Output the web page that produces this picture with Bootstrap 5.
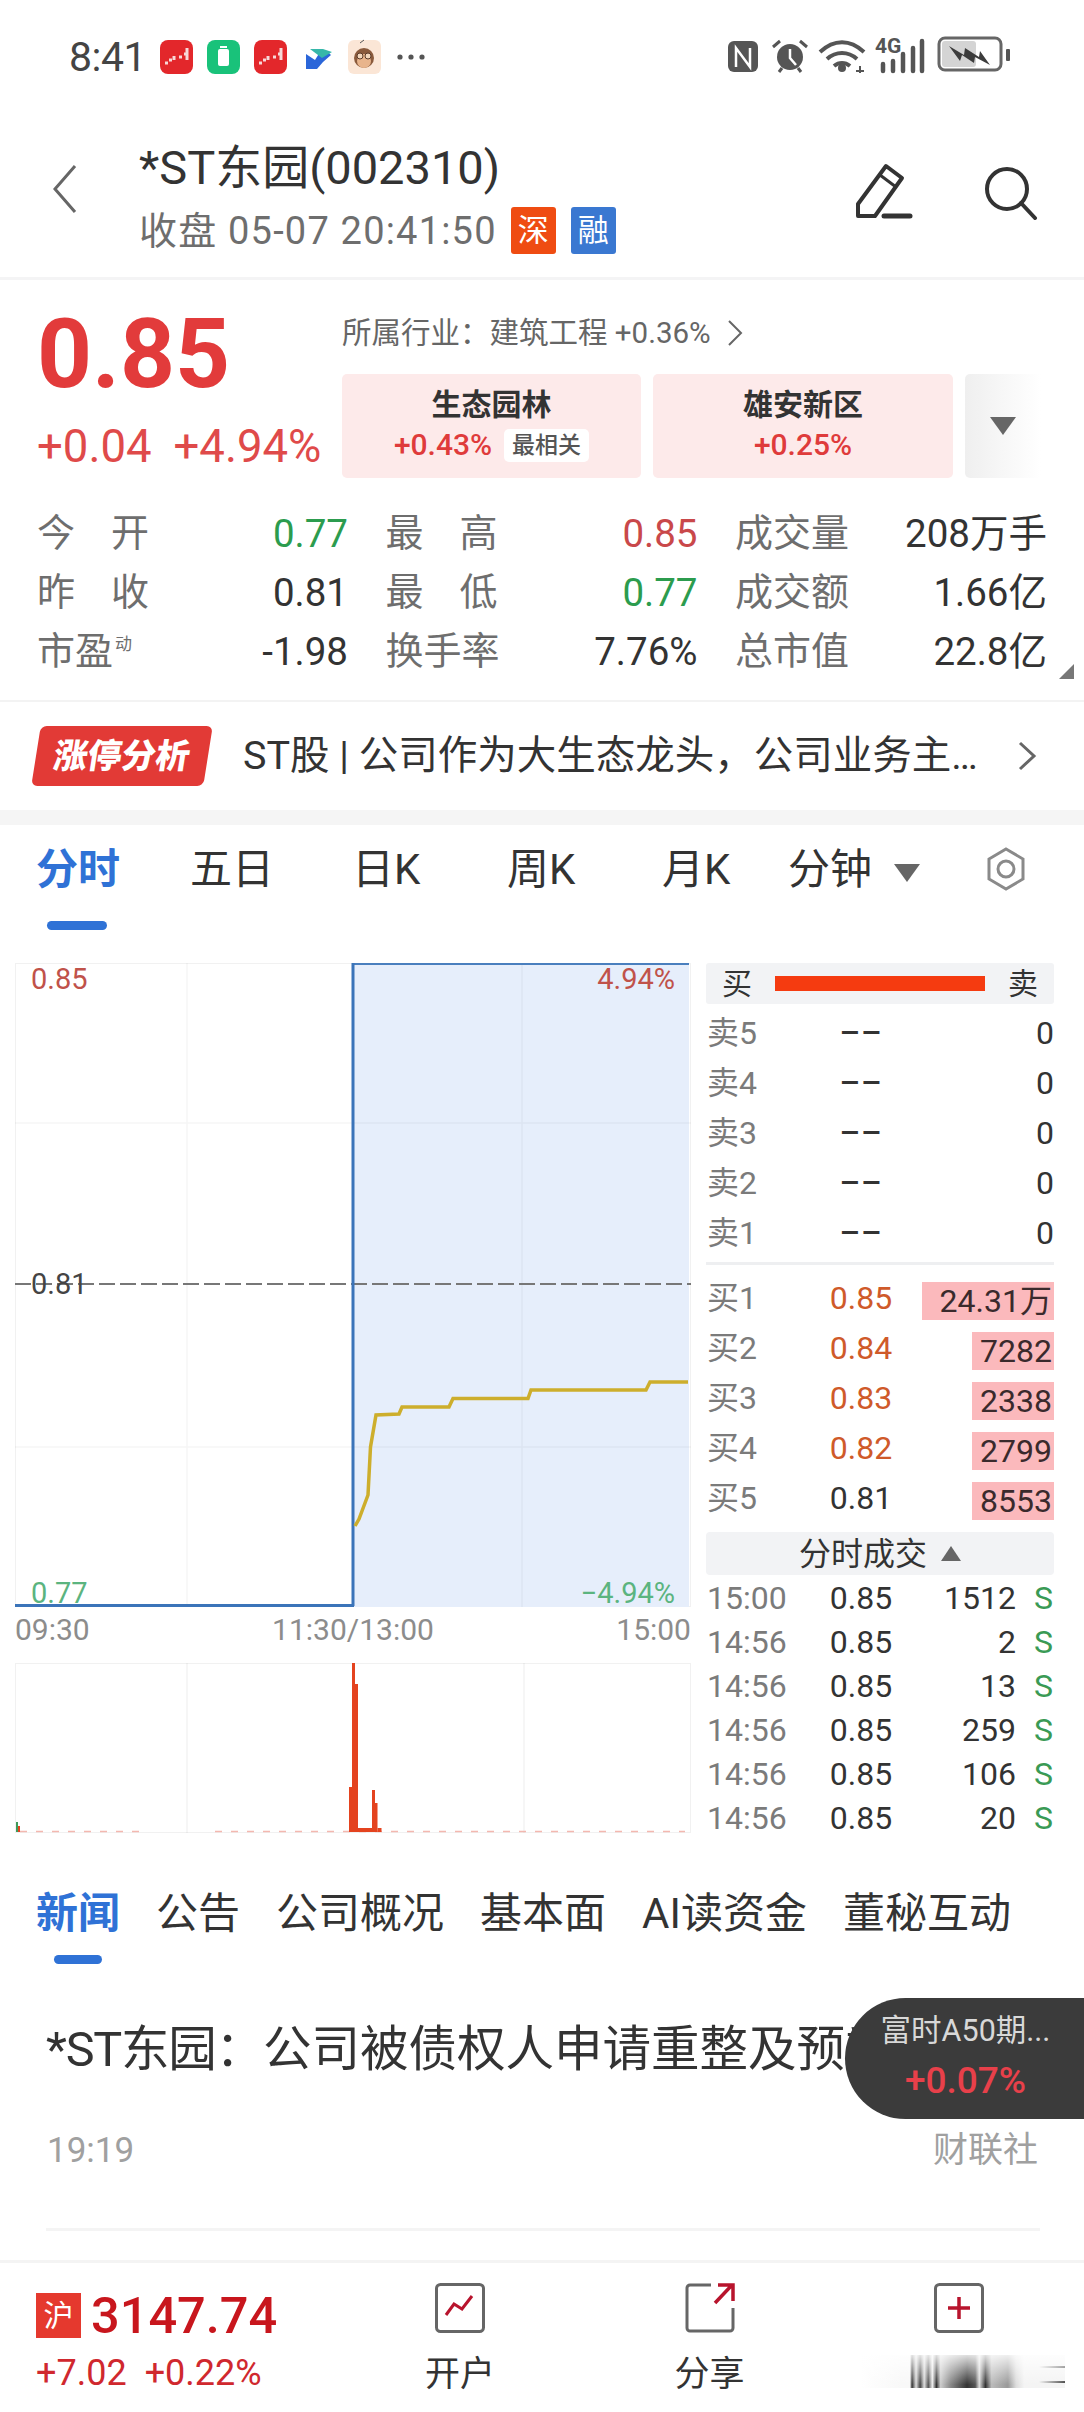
<!DOCTYPE html>
<html lang="zh-CN">
<head>
<meta charset="utf-8">
<title>*ST东园</title>
<link rel="stylesheet" href="https://cdn.jsdelivr.net/npm/bootstrap@5.3.0/dist/css/bootstrap.min.css">
<style>
html,body{margin:0;background:#fff}
body{width:1084px;height:2412px;overflow:hidden;font-family:Roboto,"Noto Sans CJK SC",sans-serif;color:#333}
.x-status{height:110px;padding:40px 74px 0 69px}
.x-time{font-size:41px;line-height:34px;color:#444;width:91px;flex-shrink:0;letter-spacing:-.5px}
.x-status svg{overflow:visible}
.x-head{height:167px;padding-left:52px}
.x-back{margin-top:54px;margin-right:62px}
.x-title{font-size:47px;line-height:50px;margin-top:33px;font-weight:400;color:#333}
.x-sub{font-size:38px;line-height:44px;color:#6e6e6e;margin-top:14px;letter-spacing:1.2px}
.x-tag{width:45px;height:47px;border-radius:3px;color:#fff;font-size:31px;line-height:47px;text-align:center;margin-left:14px;letter-spacing:0}
.x-tag+.x-tag{margin-left:15px}
.x-thin{height:3px;background:#f4f4f5}
.x-quote{height:420px;padding:0 37px}
.x-top{height:224px}
.x-left{width:305px;padding-top:26px}
.x-price{font-size:96px;line-height:96px;font-weight:700;color:#e23b3b}
.x-chg{font-size:45.5px;line-height:50px;color:#df4a4a;margin-top:20px;white-space:nowrap}
.x-chg span+span{margin-left:22px}
.x-right{padding-top:33px}
.x-ind{font-size:29.5px;line-height:40px;color:#666;height:40px;white-space:nowrap}
.x-cards{margin-top:21px;gap:12px}
.x-tile{width:299px;height:104px;background:#fdeaea;border-radius:5px;text-align:center}
.x-tile b{display:block;font-size:30px;line-height:40px;font-weight:700;padding-top:11px;color:#333}
.x-pct{font-size:30px;line-height:40px;color:#df3b3b;font-weight:500}
.x-pill{display:inline-block;background:#fff;border-radius:5px;font-size:23px;line-height:33px;padding:0 8px;color:#555;margin-left:12px;vertical-align:2px}
.x-more{width:76px;height:104px;background:linear-gradient(90deg,#efefef,#fff);border-radius:5px 0 0 5px}
.x-tri-d{width:0;height:0;border-left:13px solid transparent;border-right:13px solid transparent;border-top:18px solid #666}
.x-stats{display:grid;grid-template-columns:311px 312px 312px;column-gap:37.5px;grid-auto-rows:59px;font-size:38.5px;position:relative}
.x-cell{display:flex;justify-content:space-between;align-items:center;line-height:59px}
.x-lab{width:112px;display:flex;justify-content:space-between;color:#6e6e6e;white-space:nowrap;font-size:38px}
.x-lab sup{font-size:17px;top:-14px;margin-left:2px}
.x-up{color:#c9484a}.x-dn{color:#2c9c4e}
.x-corner{position:absolute;right:-27px;bottom:2px;width:0;height:0;border-left:15px solid transparent;border-bottom:15px solid #777}
.x-line{height:2px;background:#f3f3f3}
.x-banner{height:108px;padding-left:32px;font-size:39.5px;color:#333;white-space:nowrap}
.x-badge{width:172px;height:60px;margin-left:4px;background:#e23a36;border-radius:6px;transform:skewX(-9deg);color:#fff;font-size:34px;font-weight:900;text-align:center;line-height:60px;margin-right:35px;white-space:nowrap}
.x-band{height:15px;background:#f5f5f5}
.x-tabs{display:grid;grid-template-columns:154px 162px 155px 155px 126px 198px 1fr;padding-left:36px;height:138px;font-size:42px;color:#333;position:relative}
.x-tabs>div{line-height:40px;padding-top:25px;white-space:nowrap}
.x-on{color:#2f72d6;font-weight:700}
.x-tabs>.x-ul,.x-ul{position:absolute;background:#2f72d6;border-radius:5px;padding:0}
.x-ul1{left:47px;top:96px;width:60px;height:9px}
.x-chartrow{height:897px;padding-left:15px}
.x-ch{width:676px;margin-right:15px}
.x-ch svg{display:block}
.x-ch text{font-family:Roboto,sans-serif;font-size:29px}
.x-times{height:56px;font-size:30px;line-height:46px;color:#8c8c8c}
.x-book{width:348px;font-size:32px}
.x-bar{height:41px;background:#f2f3f5;border-radius:3px;padding:0 16px;font-size:30px}
.x-red{width:210px;height:15px;background:#f53b10}
.x-orow{display:grid;grid-template-columns:95px 120px 133px;height:50px;align-items:center;line-height:50px}
.x-orow>div:nth-child(1),.x-trow>div:nth-child(1){color:#7b7b7b;padding-left:1px}
.x-orow>div:nth-child(2),.x-trow>div:nth-child(2){text-align:center}
.x-orow>div:nth-child(3){text-align:right}
.x-dash{letter-spacing:1px;font-weight:500}
.x-hl{display:inline-block;background:#fbb9bc;line-height:38px;height:38px;padding:0 2px 0 0;text-align:right;vertical-align:middle;color:#3a2a2c;width:82px}
.x-hl-w{width:132px}
.x-buy{color:#cf5a2a}
.x-div{height:3px;background:#eeeff1;margin:4px 0 8px}
.x-bar2{height:43px;background:#f2f3f5;border-radius:4px;margin:9px 0 1px;gap:14px}
.x-tri-u{width:0;height:0;border-left:10px solid transparent;border-right:10px solid transparent;border-bottom:15px solid #666}
.x-trow{display:grid;grid-template-columns:95px 120px 95px 37px;height:44px;line-height:44px}
.x-trow>div:nth-child(3),.x-trow>div:nth-child(4){text-align:right}
.x-s{color:#3a9a55}
.x-news{height:400px;position:relative}
.x-ntabs{height:105px;padding:33px 0 0 36px;gap:36px;font-size:42px;line-height:41px;color:#333;position:relative;white-space:nowrap}
.x-ul2{left:54px;top:95px;width:48px;height:9px}
.x-ntitle{padding-left:46px;font-size:48.5px;line-height:60px;margin-top:55px;white-space:nowrap;overflow:hidden;color:#333}
.x-tight{letter-spacing:-1.2px}
.x-meta{padding:0 46px 0 47px;margin-top:51px;color:#a0a0a0;font-size:35px;line-height:40px}
.x-ndiv{height:3px;background:#f4f4f4;margin:57px 44px 0 46px}
.x-float{position:absolute;right:0;top:138px;width:239px;height:121px;background:#3b3b3b;border-radius:62px 0 0 62px;text-align:center;padding-top:13px;padding-right:14px}
.x-f1{font-size:30.5px;line-height:40px;color:#d8d8d8;white-space:nowrap;padding-left:16px}
.x-f2{font-size:37px;line-height:44px;color:#e8404a;font-weight:500;padding-left:16px;margin-top:8px}
.x-foot{height:152px;border-top:3px solid #f4f4f4;display:grid;grid-template-columns:335px 250px 249px 250px}
.x-idx{padding:30px 0 0 36px}
.x-hu{width:45px;height:45px;background:#e5392e;color:#fff;font-size:30px;line-height:45px;text-align:center;margin-right:10px}
.x-num{font-size:50.500px;line-height:45px;font-weight:500;color:#c8161d}
.x-idxc{font-size:36px;line-height:40px;color:#d0282e;margin-top:15px;white-space:nowrap}
.x-idxc span+span{margin-left:18px}
.x-act{text-align:center;padding-top:20px;font-size:35px;line-height:40px;color:#333}
.x-act svg{display:block;margin:0 auto 22px}
.x-smear{width:204px;height:33px;margin:0 auto;transform:translateX(4px);background:
 linear-gradient(180deg,rgba(255,255,255,.85),rgba(255,255,255,0) 90%),
 linear-gradient(90deg,#f4f4f4,#444) right 0 top 11px/26px 2px no-repeat,
 linear-gradient(90deg,#f4f4f4,#444) right 0 top 26px/26px 2px no-repeat,
 linear-gradient(90deg,#fff 0,#f8f8f8 20%,#f8f8f8 24%,#333 25%,#ddd 27%,#444 29%,#ddd 31%,#555 33%,#eee 35%,#333 37%,#ccc 39%,#888 44%,#333 52%,#555 56%,#ddd 58%,#333 61%,#bbb 64%,#999 72%,#ddd 76%,#f4f4f4 80%,#f4f4f4 100%)}
</style>
</head>
<body>

<div class="x-status d-flex align-items-start">
  <div class="x-time">8:41</div>
  <svg width="270" height="34" viewBox="0 0 270 34" class="flex-shrink-0">
    <rect x="0" y="0" width="33" height="34" rx="8" fill="#e3272b"/><path d="M5 23h3M9 20h3M14 20v-4M19 17h3M24 14h3M27 8v12" stroke="#f7d8d8" stroke-width="3" fill="none"/>
    <rect x="47" y="0" width="33" height="34" rx="8" fill="#19c27a"/><rect x="58" y="9" width="11" height="17" rx="2" fill="#fff"/><rect x="60" y="6" width="7" height="2" fill="#fff"/>
    <rect x="94" y="0" width="33" height="34" rx="8" fill="#e3272b"/><path d="M99 23h3M103 20h3M108 20v-4M113 17h3M118 14h3M121 8v12" stroke="#f7d8d8" stroke-width="3" fill="none"/>
    <path d="M146 14l9 6 5-8h8l3 3-8 7-6 7h-11z" fill="#2b66d9"/><path d="M150 9l12 9 10-6-9-3z" fill="#36b7a9"/>
    <rect x="188" y="0" width="33" height="34" rx="6" fill="#fbe6d6"/><circle cx="204" cy="18" r="10" fill="#8a5a3c"/><circle cx="204" cy="21" r="7" fill="#e8b48c"/><circle cx="200" cy="16" r="3" fill="#f2d6bc" stroke="#5a3a28"/><circle cx="208" cy="16" r="3" fill="#f2d6bc" stroke="#5a3a28"/><path d="M200 3l4-3" stroke="#555"/>
    <circle cx="240" cy="17" r="2.600" fill="#555"/><circle cx="251" cy="17" r="2.600" fill="#555"/><circle cx="262" cy="17" r="2.600" fill="#555"/>
  </svg>
  <svg class="ms-auto" width="283" height="34" viewBox="0 0 283 34">
    <rect x="1" y="1" width="30" height="31" rx="6" fill="#555"/><path d="M9 27V8l14 19V8" stroke="#fff" stroke-width="2.500" fill="none"/>
    <circle cx="63" cy="17" r="13" fill="#555"/><path d="M63 9v9l6 7" stroke="#fff" stroke-width="2.500" fill="none"/><path d="M46 7l7-6M80 7l-7-6M52 32l3-4M74 32l-3-4" stroke="#555" stroke-width="3"/>
    <path d="M93 12c14-13 30-13 44 0M100 19c9-8 21-8 30 0M107 26c5-4 11-4 16 0" stroke="#555" stroke-width="4" fill="none"/><circle cx="115" cy="28" r="4" fill="#555"/><path d="M129 31h8M133 26v7" stroke="#555" stroke-width="2" fill="none"/>
    <text x="148" y="13" font-family="Roboto,sans-serif" font-size="21" font-weight="700" fill="#555">4G</text>
    <path d="M156 24v7M166 21v10M176 14v17M186 8v23M195 1v30" stroke="#555" stroke-width="4.500" stroke-linecap="round"/>
    <rect x="212" y="-2" width="62" height="32" rx="6" fill="#fff" stroke="#666" stroke-width="3"/><rect x="215" y="1" width="34" height="26" rx="3" fill="#d4d4d4"/><path d="M222 6l15 9 1-7 14 9 1-6 10 14-15-8-1 6-12-8-2 6z" fill="#3c3c3c"/><rect x="279" y="9" width="4" height="12" rx="1" fill="#555"/>
  </svg>
</div>

<div class="x-head d-flex align-items-start">
  <svg class="x-back flex-shrink-0" width="25" height="50" viewBox="0 0 25 50"><path d="M23 2L3 25l20 23" stroke="#666" stroke-width="3" fill="none"/></svg>
  <div class="flex-shrink-0">
    <div class="x-title">*ST东园(002310)</div>
    <div class="x-sub d-flex align-items-center">收盘 05-07 20:41:50<span class="x-tag" style="background:#ef4c12">深</span><span class="x-tag" style="background:#3a78d1">融</span></div>
  </div>
  <svg class="ms-auto" width="58" height="58" viewBox="0 0 58 58" style="margin-top:53px"><path d="M3 41L31 3l16 12-27 38H3z" fill="none" stroke="#333" stroke-width="4" stroke-linejoin="round"/><path d="M25 12l16 12" stroke="#333" stroke-width="3"/><path d="M29 53h26" stroke="#333" stroke-width="5" stroke-linecap="round"/></svg>
  <svg width="54" height="54" viewBox="0 0 54 54" style="margin:56px 46px 0 71px"><circle cx="23" cy="23" r="20" fill="none" stroke="#333" stroke-width="4"/><path d="M37 37l14 15" stroke="#333" stroke-width="4" stroke-linecap="round"/></svg>
</div>
<div class="x-thin"></div>

<div class="x-quote">
  <div class="x-top d-flex">
    <div class="x-left flex-shrink-0">
      <div class="x-price">0.85</div>
      <div class="x-chg"><span>+0.04</span><span>+4.94%</span></div>
    </div>
    <div class="x-right flex-shrink-0">
      <div class="x-ind d-flex align-items-center">所属行业：建筑工程&nbsp;+0.36%<svg class="ms-3" width="16" height="28" viewBox="0 0 16 28"><path d="M2 2l12 12L2 26" stroke="#666" stroke-width="2" fill="none"/></svg></div>
      <div class="x-cards d-flex">
        <div class="x-tile"><b>生态园林</b><div class="x-pct d-flex align-items-center justify-content-center">+0.43%<span class="x-pill">最相关</span></div></div>
        <div class="x-tile" style="width:300px"><b>雄安新区</b><div class="x-pct">+0.25%</div></div>
        <div class="x-more d-flex align-items-center justify-content-center"><div class="x-tri-d"></div></div>
      </div>
    </div>
  </div>
  <div class="x-stats">
    <div class="x-cell"><div class="x-lab"><span>今</span><span>开</span></div><span class="x-dn">0.77</span></div>
    <div class="x-cell"><div class="x-lab"><span>最</span><span>高</span></div><span class="x-up">0.85</span></div>
    <div class="x-cell"><div class="x-lab"><span>成交量</span></div><span>208万手</span></div>
    <div class="x-cell"><div class="x-lab"><span>昨</span><span>收</span></div><span>0.81</span></div>
    <div class="x-cell"><div class="x-lab"><span>最</span><span>低</span></div><span class="x-dn">0.77</span></div>
    <div class="x-cell"><div class="x-lab"><span>成交额</span></div><span>1.66亿</span></div>
    <div class="x-cell"><div class="x-lab"><span>市盈<sup>动</sup></span></div><span>-1.98</span></div>
    <div class="x-cell"><div class="x-lab"><span>换手率</span></div><span>7.76%</span></div>
    <div class="x-cell"><div class="x-lab"><span>总市值</span></div><span>22.8亿</span></div>
    <div class="x-corner"></div>
  </div>
</div>
<div class="x-line"></div>

<div class="x-banner d-flex align-items-center">
  <div class="x-badge flex-shrink-0">涨停分析</div>
  <div class="flex-shrink-0">ST股 | 公司作为大生态龙头，公司业务主…</div>
  <svg class="ms-auto" style="margin-right:47px" width="19" height="30" viewBox="0 0 19 30"><path d="M2 2l14 13L2 28" stroke="#666" stroke-width="3" fill="none"/></svg>
</div>
<div class="x-band"></div>

<div class="x-tabs">
  <div class="x-on">分时</div><div>五日</div><div>日K</div><div>周K</div><div>月K</div>
  <div class="d-flex align-items-start gap-3">分钟<span class="x-tri-d" style="margin-top:14px;margin-left:6px"></span></div>
  <div style="padding-top:21px"><svg width="40" height="44" viewBox="0 0 40 44"><path d="M20 2l17 10v20L20 42 3 32V12z" fill="none" stroke="#8a8a8a" stroke-width="3"/><circle cx="20" cy="22" r="8" fill="none" stroke="#8a8a8a" stroke-width="3"/></svg></div>
  <div class="x-ul x-ul1"></div>
</div>

<div class="x-chartrow d-flex">
  <div class="x-ch flex-shrink-0">
    <svg width="676" height="644" viewBox="0 0 676 644">
      <rect x="0.5" y="0.5" width="675" height="643" fill="#fff" stroke="#f1f1f1"/>
      <rect x="338" y="0" width="336" height="644" fill="#e6eefb"/>
      <path d="M172 0v644M507 0v644M0 160h676M0 484h676" stroke="#000" stroke-opacity=".04" stroke-width="1.500"/>
      <path d="M0 321h676" stroke="#777" stroke-width="2" stroke-dasharray="16 5"/>
      <path d="M338 1h336" stroke="#4a7fbe" stroke-width="2"/>
      <path d="M338 0v643" stroke="#3b74b9" stroke-width="3"/>
      <path d="M0 642.500h339" stroke="#3b74b9" stroke-width="3"/>
      <polyline points="340,563 344,556 353,532 355.500,484 361,452 384,451 387,444 434,444 438,435.500 513,435.500 516,427 631,427 635,419 673,419" fill="none" stroke="#cdae2c" stroke-width="3.500"/>
      <text x="16" y="26" fill="#c0524a">0.85</text>
      <text x="660" y="26" text-anchor="end" fill="#c0524a">4.94%</text>
      <text x="16" y="331" fill="#444">0.81</text>
      <text x="16" y="640" fill="#5bb47f">0.77</text>
      <text x="660" y="640" text-anchor="end" fill="#5bb47f">−4.94%</text>
    </svg>
    <div class="x-times d-flex justify-content-between"><span>09:30</span><span>11:30/13:00</span><span>15:00</span></div>
    <svg width="676" height="170" viewBox="0 0 676 170">
      <rect x="0.5" y="0.5" width="675" height="169" fill="#fff" stroke="#f1f1f1"/>
      <path d="M172 0v170M509 0v170" stroke="#000" stroke-opacity=".05" stroke-width="1.500"/>
      <path d="M5 168.500h125M200 168.500h470" stroke="#f3b8b0" stroke-width="1.500" stroke-dasharray="7 9"/>
      <rect x="1" y="159" width="2" height="10" fill="#3f9a5a"/><rect x="3" y="163" width="2" height="6" fill="#e4431f"/>
      <g fill="#e4431f"><rect x="334" y="124" width="3" height="45"/><rect x="337" y="0" width="3" height="169"/><rect x="340" y="21" width="3" height="148"/><rect x="343" y="165" width="14" height="4"/><rect x="357" y="127" width="3" height="42"/><rect x="360" y="140" width="2.500" height="29"/><rect x="362.500" y="165" width="4" height="4"/></g>
    </svg>
  </div>
  <div class="x-book flex-shrink-0">
    <div class="x-bar d-flex align-items-center justify-content-between"><span>买</span><div class="x-red"></div><span>卖</span></div>
    <div style="height:4px"></div>
    <div class="x-orow"><div>卖5</div><div class="x-dash">––</div><div>0</div></div>
    <div class="x-orow"><div>卖4</div><div class="x-dash">––</div><div>0</div></div>
    <div class="x-orow"><div>卖3</div><div class="x-dash">––</div><div>0</div></div>
    <div class="x-orow"><div>卖2</div><div class="x-dash">––</div><div>0</div></div>
    <div class="x-orow"><div>卖1</div><div class="x-dash">––</div><div>0</div></div>
    <div class="x-div"></div>
    <div class="x-orow"><div>买1</div><div class="x-buy">0.85</div><div><span class="x-hl x-hl-w">24.31万</span></div></div>
    <div class="x-orow"><div>买2</div><div class="x-buy">0.84</div><div><span class="x-hl">7282</span></div></div>
    <div class="x-orow"><div>买3</div><div class="x-buy">0.83</div><div><span class="x-hl">2338</span></div></div>
    <div class="x-orow"><div>买4</div><div class="x-buy">0.82</div><div><span class="x-hl">2799</span></div></div>
    <div class="x-orow"><div>买5</div><div>0.81</div><div><span class="x-hl">8553</span></div></div>
    <div class="x-bar2 d-flex align-items-center justify-content-center"><span>分时成交</span><span class="x-tri-u"></span></div>
    <div class="x-trow"><div>15:00</div><div>0.85</div><div>1512</div><div class="x-s">S</div></div>
    <div class="x-trow"><div>14:56</div><div>0.85</div><div>2</div><div class="x-s">S</div></div>
    <div class="x-trow"><div>14:56</div><div>0.85</div><div>13</div><div class="x-s">S</div></div>
    <div class="x-trow"><div>14:56</div><div>0.85</div><div>259</div><div class="x-s">S</div></div>
    <div class="x-trow"><div>14:56</div><div>0.85</div><div>106</div><div class="x-s">S</div></div>
    <div class="x-trow"><div>14:56</div><div>0.85</div><div>20</div><div class="x-s">S</div></div>
  </div>
</div>

<div class="x-news">
  <div class="x-ntabs d-flex">
    <div class="x-on">新闻</div><div>公告</div><div>公司概况</div><div>基本面</div><div>AI读资金</div><div>董秘互动</div>
    <div class="x-ul x-ul2"></div>
  </div>
  <div class="x-ntitle"><span class="x-tight">*ST东园：</span>公司被债权人申请重整及预重整</div>
  <div class="x-meta d-flex justify-content-between"><span>19:19</span><span>财联社</span></div>
  <div class="x-ndiv"></div>
  <div class="x-float"><div class="x-f1">富时A50期...</div><div class="x-f2">+0.07%</div></div>
</div>

<div class="x-foot">
  <div class="x-idx">
    <div class="d-flex align-items-center"><span class="x-hu">沪</span><span class="x-num">3147.74</span></div>
    <div class="x-idxc"><span>+7.02</span><span>+0.22%</span></div>
  </div>
  <div class="x-act">
    <svg width="50" height="50" viewBox="0 0 50 50"><rect x="1.500" y="1.500" width="47" height="47" rx="4" fill="none" stroke="#666" stroke-width="3"/><path d="M11 32l8-11 8 5 10-13" fill="none" stroke="#b8142d" stroke-width="3"/></svg>
    开户
  </div>
  <div class="x-act">
    <svg width="50" height="50" viewBox="0 0 50 50"><path d="M26 2H5a3 3 0 0 0-3 3v40a3 3 0 0 0 3 3h40a3 3 0 0 0 3-3V25" fill="none" stroke="#666" stroke-width="3"/><path d="M30 20L47 2M33 2h15v16" fill="none" stroke="#b8142d" stroke-width="3.500"/></svg>
    分享
  </div>
  <div class="x-act">
    <svg width="50" height="50" viewBox="0 0 50 50"><rect x="1.500" y="1.500" width="47" height="47" rx="4" fill="none" stroke="#666" stroke-width="3"/><path d="M25 14v22M14 25h22" fill="none" stroke="#b8142d" stroke-width="3.500"/></svg>
    <div class="x-smear"></div>
  </div>
</div>
</body>
</html>
